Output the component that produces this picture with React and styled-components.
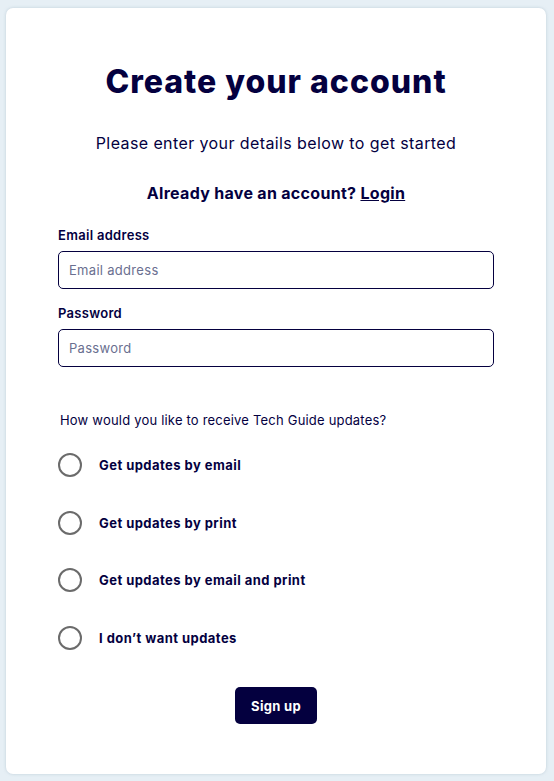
import React from 'react'
import styled, { createGlobalStyle } from 'styled-components'

const GlobalStyle = createGlobalStyle`
    * { box-sizing: border-box; }
    body {
        margin: 0;
        background: #e6eff5;
        font-family: "Inter", "Noto Sans", sans-serif;
        color: #04003f;
    }
`

const Page = styled.div`
    padding: 8px 8px 7px 6px;
    min-height: 781px;
`

const Card = styled.form`
    background: #ffffff;
    border-radius: 7px;
    box-shadow: 0 0 3px rgba(150, 175, 190, 0.5);
    padding: 56px 52px 50px 52px;
    display: flex;
    flex-direction: column;
`

const Title = styled.h1`
    margin: 0;
    text-align: center;
    font-size: 32px;
    font-weight: 800;
    line-height: 36px;
    letter-spacing: 1px;
`

const Subtitle = styled.p`
    margin: 32px 0 0;
    text-align: center;
    font-size: 16px;
    line-height: 22px;
    letter-spacing: 0.4px;
`

const LoginLine = styled.p`
    margin: 28px 0 0;
    text-align: center;
    font-size: 16px;
    font-weight: 700;
    line-height: 22px;
    letter-spacing: 0.3px;

    a {
        color: inherit;
        text-decoration: underline;
    }
`

const Field = styled.div`
    display: flex;
    flex-direction: column;
    gap: 8px;
    margin-top: ${p => p.$top}px;
`

const Label = styled.label`
    font-size: 13px;
    font-weight: 600;
    line-height: 16px;
    letter-spacing: 0.3px;
`

const Input = styled.input`
    height: 38px;
    border: 1px solid #04003f;
    border-radius: 5px;
    padding: 0 10px;
    font-family: inherit;
    font-size: 13px;
    letter-spacing: 0.3px;
    color: #04003f;

    &::placeholder {
        color: #6a6f90;
    }
`

const Question = styled.p`
    margin: 45px 0 0 2px;
    font-size: 13px;
    line-height: 16px;
    letter-spacing: 0.2px;
`

const Options = styled.div`
    display: flex;
    flex-direction: column;
    gap: 33.7px;
    margin-top: 25px;
`

const Option = styled.label`
    display: flex;
    align-items: center;
    gap: 17px;
    font-size: 13px;
    font-weight: 700;
    letter-spacing: 0.45px;
    cursor: pointer;
`

const Radio = styled.span`
    width: 24px;
    height: 24px;
    border-radius: 50%;
    border: 2px solid #6b6b6b;
    flex-shrink: 0;
`

const Button = styled.button`
    align-self: center;
    margin-top: 37px;
    width: 82px;
    height: 37px;
    border: none;
    border-radius: 5px;
    background: #04003f;
    color: #ffffff;
    font-family: inherit;
    font-size: 13px;
    font-weight: 700;
    letter-spacing: 0.3px;
`

const options = [
    'Get updates by email',
    'Get updates by print',
    'Get updates by email and print',
    'I don\u2019t want updates',
]

export default function App() {
    return (
        <Page>
            <GlobalStyle />
            <Card onSubmit={e => e.preventDefault()}>
                <Title>Create your account</Title>
                <Subtitle>Please enter your details below to get started</Subtitle>
                <LoginLine>Already have an account? <a href="#">Login</a></LoginLine>
                <Field $top={23}>
                    <Label htmlFor="email">Email address</Label>
                    <Input id="email" type="email" placeholder="Email address" />
                </Field>
                <Field $top={16}>
                    <Label htmlFor="password">Password</Label>
                    <Input id="password" type="password" placeholder="Password" />
                </Field>
                <Question>How would you like to receive Tech Guide updates?</Question>
                <Options>
                    {options.map(o => (
                        <Option key={o}>
                            <Radio />
                            {o}
                        </Option>
                    ))}
                </Options>
                <Button type="submit">Sign up</Button>
            </Card>
        </Page>
    )
}
